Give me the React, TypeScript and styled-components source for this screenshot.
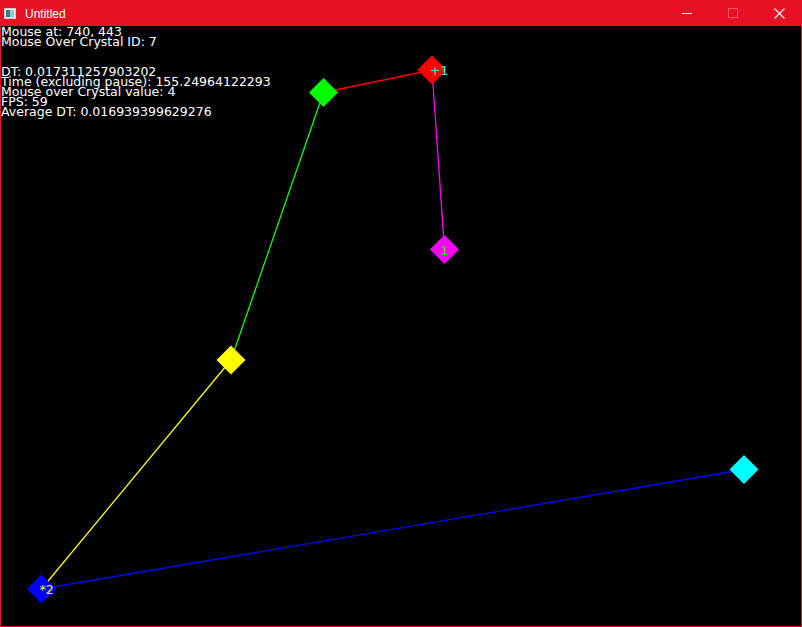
import React from "react";
import styled, { createGlobalStyle } from "styled-components";

const Global = createGlobalStyle`
  html, body { margin: 0; padding: 0; background: #000; }
  body { width: 802px; height: 627px; overflow: hidden; }
`;

const RED = "#e81123";

const Window = styled.div`
  box-sizing: border-box;
  width: 802px;
  height: 627px;
  display: flex;
  flex-direction: column;
  border: 1px solid ${RED};
  border-top: none;
  background: ${RED};
`;

const TitleBar = styled.div`
  height: 26px;
  flex: 0 0 26px;
  display: flex;
  align-items: center;
  background: ${RED};
  margin: 0 -1px;
`;

const AppIcon = styled.div`
  width: 12px;
  height: 11px;
  margin: 1px 9px 0 4px;
  display: flex;
`;

const Title = styled.span`
  flex: 1;
  color: #fff;
  font-family: "Liberation Sans", Arial, sans-serif;
  font-size: 12px;
  line-height: 26px;
  padding-top: 1px;
`;

const Controls = styled.div`
  display: flex;
  height: 26px;
`;

const CtrlButton = styled.div`
  width: 46px;
  height: 26px;
  display: flex;
  align-items: center;
  justify-content: center;
`;

const Canvas = styled.div`
  position: relative;
  flex: 1;
  background: #000;
  overflow: hidden;
`;

const Debug = styled.div`
  position: absolute;
  left: 0;
  top: 1px;
  color: #fff;
  font-family: "DejaVu Sans", sans-serif;
  font-size: 12.5px;
  line-height: 10px;
  white-space: pre;
`;

const DebugLine = styled.div<{ $gap?: number }>`
  height: 10px;
  margin-top: ${(p) => p.$gap ?? 0}px;
`;

const Scene = styled.svg`
  position: absolute;
  inset: 0;
  display: block;
`;

type Crystal = { x: number; y: number; color: string; label?: string; labelColor?: string; lx?: number };

const crystals: Record<string, Crystal> = {
  green: { x: 323.5, y: 92.5, color: "#00ff00" },
  red: { x: 432, y: 70, color: "#ff0000", label: "+1", labelColor: "#00ffff", lx: -2 },
  magenta: { x: 444.5, y: 249.5, color: "#ff00ff", label: "1", labelColor: "#00ff00", lx: -4 },
  yellow: { x: 231, y: 360, color: "#ffff00" },
  blue: { x: 41.5, y: 589, color: "#0000ff", label: "*2", labelColor: "#ffff00", lx: -2 },
  cyan: { x: 744, y: 469.5, color: "#00ffff" },
};

const links: [string, string, string][] = [
  ["green", "red", "#ff0000"],
  ["red", "magenta", "#ff00ff"],
  ["green", "yellow", "#00ff00"],
  ["yellow", "blue", "#ffff00"],
  ["blue", "cyan", "#0000ff"],
];

const debugLines: { text: string; gap?: number }[] = [
  { text: "Mouse at: 740, 443" },
  { text: "Mouse Over Crystal ID: 7" },
  { text: "DT: 0.017311257903202", gap: 20 },
  { text: "Time (excluding pause): 155.24964122293" },
  { text: "Mouse over Crystal value: 4" },
  { text: "FPS: 59" },
  { text: "Average DT: 0.016939399629276" },
];

const H = 14.5;

export default function App() {
  return (
    <>
      <Global />
      <Window>
        <TitleBar>
          <AppIcon>
            <svg width="12" height="11" viewBox="0 0 12 11">
              <rect x="0.5" y="0.5" width="11" height="10" fill="#e8eef0" stroke="#c8d0d4" />
              <rect x="2" y="2" width="4" height="7" fill="#2f7f86" />
              <rect x="6" y="2" width="4" height="7" fill="#9cc7c2" />
            </svg>
          </AppIcon>
          <Title>Untitled</Title>
          <Controls>
            <CtrlButton>
              <svg width="10" height="10" viewBox="0 0 10 10">
                <rect x="0" y="5" width="10" height="1" fill="#fff" />
              </svg>
            </CtrlButton>
            <CtrlButton>
              <svg width="10" height="10" viewBox="0 0 10 10">
                <rect x="0.5" y="0.5" width="9" height="9" fill="none" stroke="#f05a68" />
              </svg>
            </CtrlButton>
            <CtrlButton>
              <svg width="11" height="11" viewBox="0 0 11 11">
                <path d="M0.5 0.5 L10.5 10.5 M10.5 0.5 L0.5 10.5" stroke="#fff" strokeWidth="1.1" />
              </svg>
            </CtrlButton>
          </Controls>
        </TitleBar>
        <Canvas>
          <Scene width="800" height="600" viewBox="1 26 800 600">
            {links.map(([a, b, c]) => (
              <line
                key={a + b}
                x1={crystals[a].x}
                y1={crystals[a].y}
                x2={crystals[b].x}
                y2={crystals[b].y}
                stroke={c}
                strokeWidth="1.3"
              />
            ))}
            {Object.entries(crystals).map(([k, c]) => (
              <g key={k}>
                <polygon
                  points={`${c.x},${c.y - H} ${c.x + H},${c.y} ${c.x},${c.y + H} ${c.x - H},${c.y}`}
                  fill={c.color}
                />
                {c.label && (
                  <text
                    x={c.x + (c.lx ?? 0)}
                    y={c.y + 5}
                    fill={c.labelColor}
                    fontFamily="DejaVu Sans, sans-serif"
                    fontSize="12.5"
                  >
                    {c.label}
                  </text>
                )}
              </g>
            ))}
          </Scene>
          <Debug>
            {debugLines.map((l, i) => (
              <DebugLine key={i} $gap={l.gap}>
                {l.text}
              </DebugLine>
            ))}
          </Debug>
        </Canvas>
      </Window>
    </>
  );
}
